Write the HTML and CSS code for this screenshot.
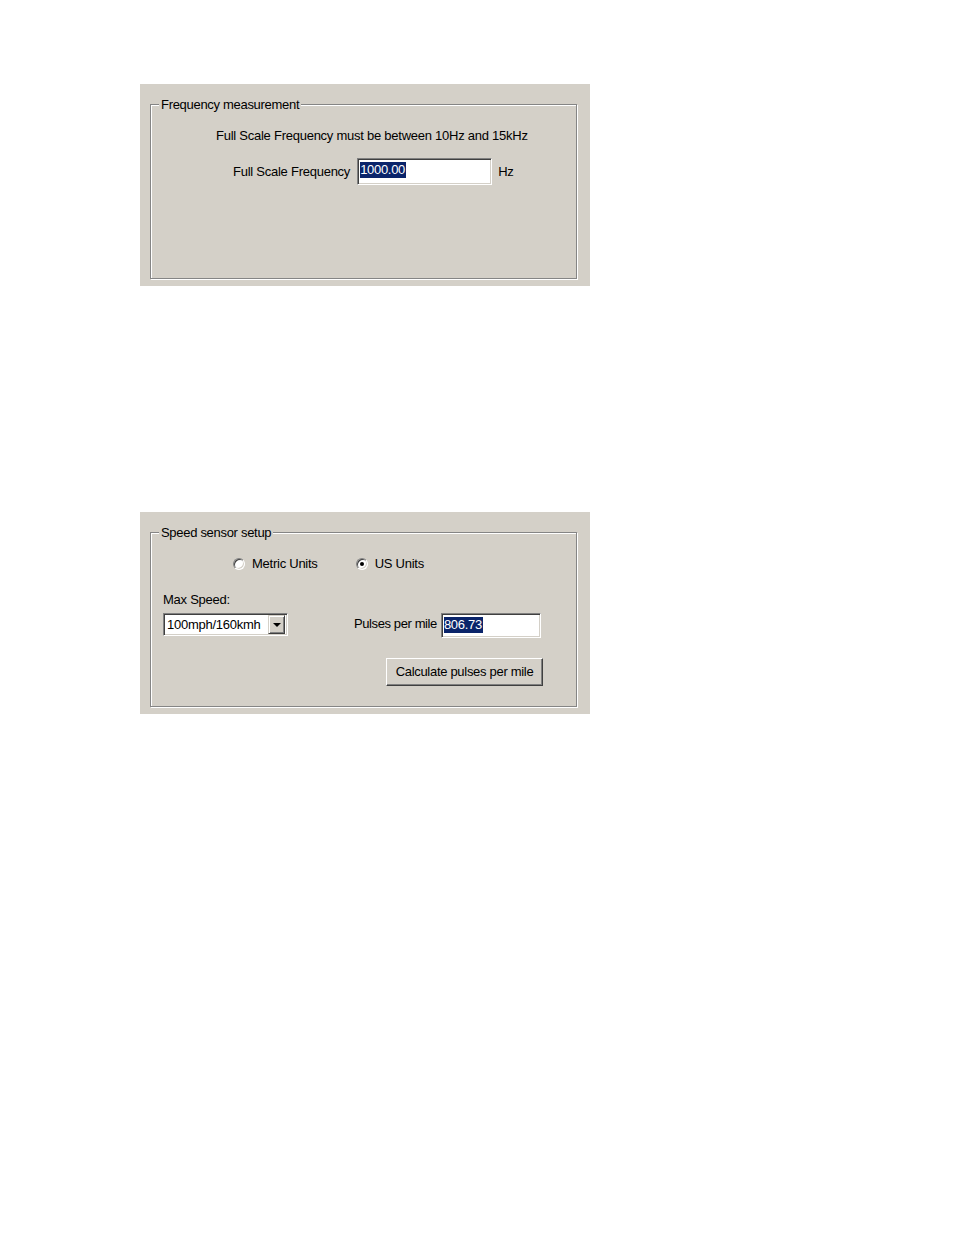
FILE: index.html
```html
<!DOCTYPE html>
<html>
<head>
<meta charset="utf-8">
<link rel="stylesheet" href="styles.css">
</head>
<body>
<div class="panel panel-freq">
  <fieldset class="group">
    <legend>Frequency measurement</legend>
    <div class="note">Full Scale Frequency must be between 10Hz and 15kHz</div>
    <div class="freq-row">
      <span class="label">Full Scale Frequency</span>
      <div class="textbox tb-freq"><span class="sel">1000.00</span></div>
      <span class="unit">Hz</span>
    </div>
  </fieldset>
</div>

<div class="panel panel-speed">
  <fieldset class="group">
    <legend>Speed sensor setup</legend>
    <div class="radio-row">
      <span class="radio"><span class="radio-circle"></span><span class="radio-text">Metric Units</span></span>
      <span class="radio radio-us"><span class="radio-circle checked"></span><span class="radio-text">US Units</span></span>
    </div>
    <div class="max-label">Max Speed:</div>
    <div class="speed-row">
      <div class="combo">
        <span class="combo-text">100mph/160kmh</span>
        <span class="combo-btn"><span class="arrow"></span></span>
      </div>
      <span class="label pulses-label">Pulses per mile</span>
      <div class="textbox tb-pulses"><span class="sel">806.73</span></div>
    </div>
    <div class="btn-row">
      <div class="button">Calculate pulses per mile</div>
    </div>
  </fieldset>
</div>
</body>
</html>
```

FILE: styles.css
```css
html, body {
  margin: 0;
  padding: 0;
  background: #ffffff;
}
body {
  width: 954px;
  height: 1235px;
  font-family: "Liberation Sans", Arial, sans-serif;
  font-size: 13px;
  line-height: 14px;
  letter-spacing: -0.25px;
  color: #000;
}
.panel {
  box-sizing: border-box;
  width: 450px;
  height: 202px;
  margin-left: 140px;
  background: #d4d0c8;
  padding: 12px 13px 7px 10px;
  display: flex;
  flex-direction: column;
}
.panel-freq { margin-top: 84px; }
.panel-speed { margin-top: 226px; }

.group {
  flex: 1;
  margin: 0;
  padding: 0;
  min-width: 0;
  border: 1px solid #858585;
  box-shadow: 1px 1px 0 #ffffff, inset 1px 1px 0 #ffffff;
}
.group legend {
  margin-left: 8px;
  padding: 2px 2px 0 2px;
  background: #d4d0c8;
  line-height: 14px;
  letter-spacing: -0.3px;
}

.note {
  margin-top: 17px;
  padding-left: 65px;
  white-space: nowrap;
}
.freq-row {
  margin-top: 15px;
  padding-left: 82px;
  display: flex;
  align-items: center;
}
.label { white-space: nowrap; }
.textbox {
  box-sizing: border-box;
  background: #fff;
  border-top: 1px solid #808080;
  border-left: 1px solid #808080;
  border-right: 1px solid #ffffff;
  border-bottom: 1px solid #ffffff;
  box-shadow: inset 1px 1px 0 #404040, inset -1px -1px 0 #d4d0c8;
  padding: 3px 2px;
}
.tb-freq {
  width: 135px;
  height: 27px;
  margin-left: 7px;
}
.unit { margin-left: 6px; }
.sel {
  display: inline-block;
  background: #0a246a;
  color: #fff;
  padding: 0 1px 1px 0;
  line-height: 15px;
  letter-spacing: -0.3px;
}

.radio-row {
  margin-top: 17px;
  padding-left: 82px;
  display: flex;
  align-items: center;
}
.radio {
  display: flex;
  align-items: center;
}
.radio-us { margin-left: 38px; }
.radio-circle {
  box-sizing: border-box;
  position: relative;
  width: 12px;
  height: 12px;
  border-radius: 50%;
  background: #fff;
  border: 1px solid;
  border-color: #808080 #ffffff #ffffff #808080;
  box-shadow: inset 1px 1px 0 #404040, inset -1px -1px 0 #d4d0c8;
  margin-right: 7px;
}
.radio-circle.checked::after {
  content: "";
  position: absolute;
  left: 3px;
  top: 3px;
  width: 4px;
  height: 4px;
  border-radius: 50%;
  background: #000;
}

.max-label {
  margin-top: 22px;
  padding-left: 12px;
}
.speed-row {
  margin-top: 6px;
  padding-left: 12px;
  display: flex;
  align-items: flex-start;
}
.combo {
  box-sizing: border-box;
  width: 125px;
  height: 23px;
  background: #fff;
  border-top: 1px solid #808080;
  border-left: 1px solid #808080;
  border-right: 1px solid #ffffff;
  border-bottom: 1px solid #ffffff;
  box-shadow: inset 1px 1px 0 #404040, inset -1px -1px 0 #d4d0c8;
  padding: 2px 2px 2px 3px;
  display: flex;
  align-items: center;
}
.combo-text {
  flex: 1;
  white-space: nowrap;
  overflow: hidden;
}
.combo-btn {
  box-sizing: border-box;
  width: 17px;
  height: 19px;
  background: #d4d0c8;
  border-top: 1px solid #d4d0c8;
  border-left: 1px solid #d4d0c8;
  border-right: 1px solid #404040;
  border-bottom: 1px solid #404040;
  box-shadow: inset 1px 1px 0 #ffffff, inset -1px -1px 0 #808080;
  display: flex;
  align-items: center;
  justify-content: center;
}
.arrow {
  width: 0;
  height: 0;
  border-left: 4px solid transparent;
  border-right: 4px solid transparent;
  border-top: 4px solid #000;
  margin-top: 1px;
}
.pulses-label {
  margin-left: 66px;
  margin-top: 4px;
  letter-spacing: -0.4px;
}
.tb-pulses {
  width: 100px;
  height: 25px;
  margin-left: 4px;
  padding: 3px 2px;
}

.btn-row {
  margin-top: 20px;
  padding-left: 235px;
  display: flex;
}
.button {
  box-sizing: border-box;
  width: 157px;
  height: 28px;
  background: #d4d0c8;
  border-top: 1px solid #ffffff;
  border-left: 1px solid #ffffff;
  border-right: 1px solid #404040;
  border-bottom: 1px solid #404040;
  box-shadow: inset -1px -1px 0 #808080;
  display: flex;
  align-items: center;
  justify-content: center;
  white-space: nowrap;
  letter-spacing: -0.3px;
}
```
